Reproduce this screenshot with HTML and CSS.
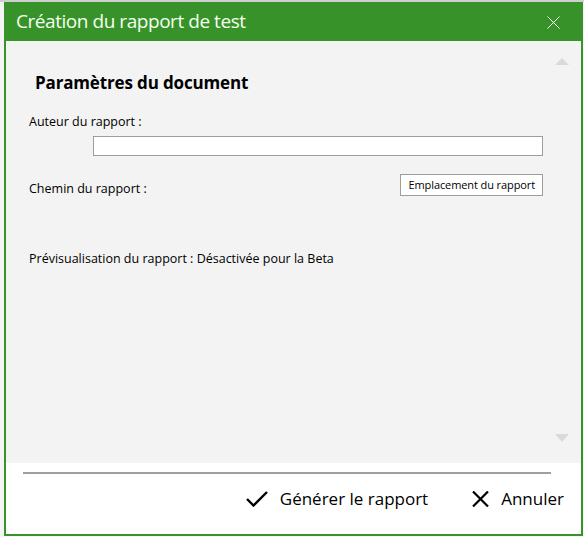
FILE: index.html
```html
<!DOCTYPE html>
<html lang="fr">
<head>
<meta charset="utf-8">
<title>Création du rapport de test</title>
<link rel="stylesheet" href="styles.css">
</head>
<body>
<div class="desk">
  <div class="dialog">
    <header class="titlebar">
      <span class="title">Création du rapport de test</span>
      <svg class="close" width="13" height="13" viewBox="0 0 13 13"><path d="M0.5 0.5 L12.5 12.5 M12.5 0.5 L0.5 12.5" stroke="#fff" stroke-width="1" fill="none"/></svg>
    </header>
    <main class="content">
      <div class="form">
        <h1 class="heading">Paramètres du document</h1>
        <div class="label">Auteur du rapport :</div>
        <div class="field"></div>
        <div class="row">
          <span class="label">Chemin du rapport :</span>
          <button class="pick">Emplacement du rapport</button>
        </div>
        <p class="preview">Prévisualisation du rapport : Désactivée pour la Beta</p>
      </div>
      <div class="scrollbar">
        <span class="arrow up"></span>
        <span class="arrow down"></span>
      </div>
    </main>
    <footer class="footer">
      <div class="sep"></div>
      <div class="actions">
        <button class="action">
          <svg width="22" height="16" viewBox="0 0 22 16"><path d="M1 8 L7.5 14.5 L21 1" stroke="#000" stroke-width="2.4" fill="none"/></svg>
          <span>Générer le rapport</span>
        </button>
        <button class="action">
          <svg width="17" height="16" viewBox="0 0 17 16"><path d="M1 0.5 L16 15.5 M16 0.5 L1 15.5" stroke="#000" stroke-width="2.2" fill="none"/></svg>
          <span>Annuler</span>
        </button>
      </div>
    </footer>
  </div>
</div>
</body>
</html>
```

FILE: styles.css
```css
html, body {
  margin: 0;
  padding: 0;
}
body {
  background: #f0f0f0;
  font-family: "Open Sans", "Noto Sans", sans-serif;
  width: 584px;
  height: 537px;
  overflow: hidden;
}
.desk {
  border-top: 2px solid #cfcfcf;
  padding-left: 4px;
  height: 535px;
  background: #f4f4f4;
}
.dialog {
  width: 579px;
  height: 534px;
  box-sizing: border-box;
  border: 2px solid #38922a;
  border-top: none;
  display: flex;
  flex-direction: column;
  background: #fff;
}
.titlebar {
  height: 39px;
  background: #38922a;
  margin: 0 -2px;
  padding: 0 23px 0 12px;
  display: flex;
  align-items: center;
  justify-content: space-between;
  flex: none;
}
.title {
  color: #f4fff0;
  font-size: 19px;
  font-weight: 400;
  line-height: 24px;
  letter-spacing: -0.45px;
  margin-top: -1px;
}
.close {
  display: block;
  margin-top: 1px;
}
.content {
  flex: 1;
  background: #f3f3f3;
  display: flex;
}
.form {
  flex: 1;
  padding: 30px 11px 0 23px;
}
.heading {
  margin: 0 0 0 6px;
  font-size: 17px;
  font-weight: 700;
  line-height: 24px;
  letter-spacing: -0.15px;
  color: #000;
}
.label {
  font-size: 12.5px;
  line-height: 18px;
  color: #000;
}
.form > .label {
  margin-top: 18px;
}
.field {
  margin: 5px 0 0 64px;
  height: 20px;
  box-sizing: border-box;
  background: #fff;
  border: 1px solid #9d9d9d;
}
.row {
  display: flex;
  justify-content: space-between;
  align-items: flex-start;
  margin-top: 18px;
}
.row .label {
  margin-top: 6px;
}
.pick {
  font-family: inherit;
  font-size: 11px;
  line-height: 14px;
  height: 22px;
  padding: 0 7px 0 8px;
  background: #fff;
  border: 1px solid #9d9d9d;
  color: #000;
  border-radius: 0;
  letter-spacing: -0.1px;
}
.preview {
  margin: 52px 0 0;
  font-size: 12.5px;
  line-height: 18px;
  color: #000;
}
.scrollbar {
  width: 16px;
  margin-right: 11px;
  padding: 17px 0 21px;
  display: flex;
  flex-direction: column;
  justify-content: space-between;
  align-items: center;
}
.arrow {
  width: 0;
  height: 0;
  border-left: 7px solid transparent;
  border-right: 7px solid transparent;
}
.arrow.up {
  border-bottom: 7px solid #dadada;
}
.arrow.down {
  border-top: 8px solid #dadada;
}
.footer {
  height: 71px;
  flex: none;
  background: #fff;
  padding-top: 9px;
  box-sizing: border-box;
}
.sep {
  height: 2px;
  background: #a0a0a0;
  margin: 0 30px 0 17px;
}
.actions {
  display: flex;
  justify-content: flex-end;
  gap: 44px;
  padding-right: 17px;
  margin-top: 13px;
}
.action {
  display: flex;
  align-items: center;
  gap: 12px;
  background: none;
  border: none;
  padding: 0;
  font-family: inherit;
  font-size: 17px;
  line-height: 24px;
  color: #000;
}
.action svg {
  display: block;
}
```
